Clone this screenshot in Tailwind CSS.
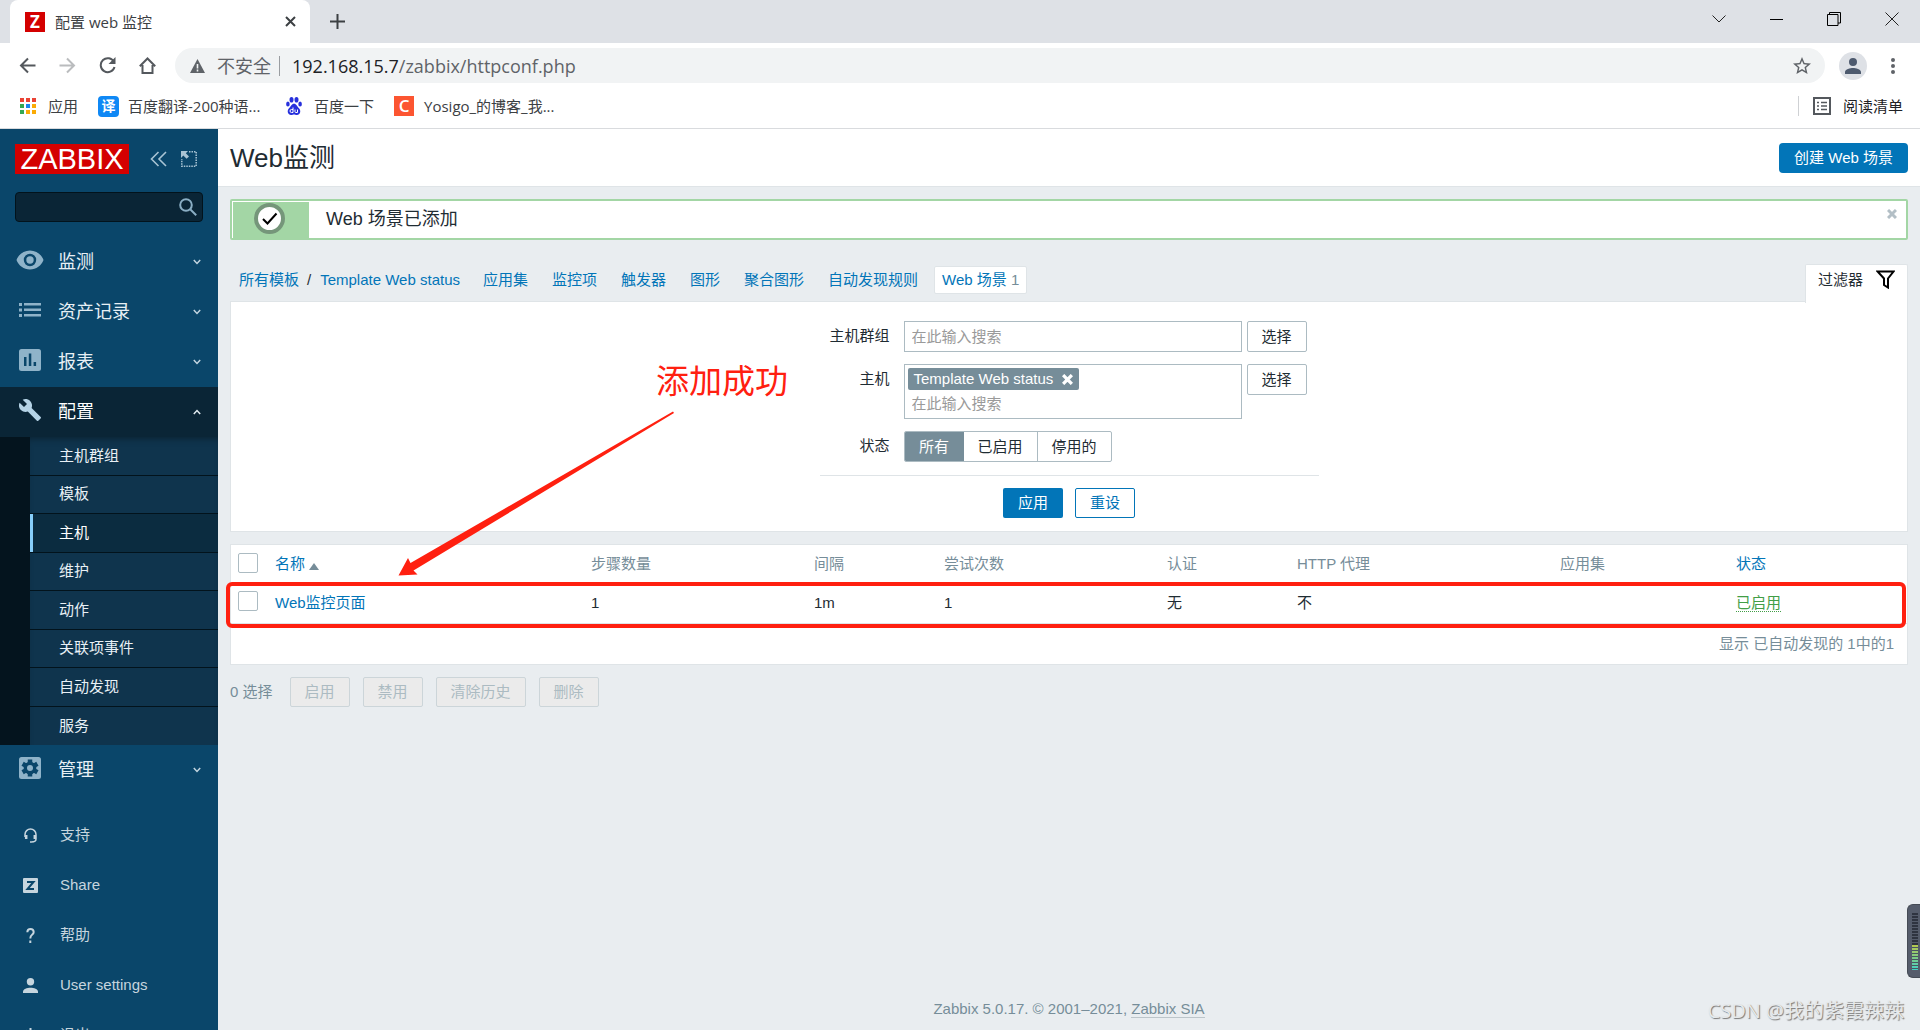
<!DOCTYPE html>
<html lang="zh-CN">
<head>
<meta charset="utf-8">
<title>配置 web 监控</title>
<script src="https://cdn.jsdelivr.net/npm/@tailwindcss/browser@4"></script>
</head>
<body class="relative flex h-screen flex-col overflow-hidden bg-[#e9edf0] font-['Liberation_Sans','Noto_Sans_CJK_SC',sans-serif] text-[15px] leading-5 text-[#1f2c33]">

<!-- Browser chrome -->
<header class="shrink-0 bg-white font-['Open_Sans','Noto_Sans_CJK_SC',sans-serif] text-[#3c4043]">
  <div class="flex h-[43px] items-center justify-between bg-[#dee1e6] pl-[10px]">
    <div class="flex h-full items-center">
      <div class="flex h-full w-[300px] items-center rounded-t-lg bg-white pl-[15px] pr-3">
        <span class="flex size-5 items-center justify-center bg-[#d40000] text-[17px] font-bold leading-5 text-white">Z</span>
        <span class="ml-[10px] flex-1 text-[15px]">配置 web 监控</span>
        <button aria-label="关闭标签页" class="flex size-4 items-center justify-center">
          <svg width="11" height="11" viewBox="0 0 11 11" stroke="#3c4043" stroke-width="2"><path d="M1 1l9 9M10 1l-9 9"/></svg>
        </button>
      </div>
      <button aria-label="新标签页" class="ml-5">
        <svg width="15" height="15" viewBox="0 0 15 15" stroke="#3c4043" stroke-width="2"><path d="M7.500 0v15M0 7.500h15"/></svg>
      </button>
    </div>
    <div class="flex items-center gap-11 pb-[6px] pr-[21px]">
      <button aria-label="搜索标签页"><svg width="14" height="14" viewBox="0 0 14 14" fill="none" stroke="#222"><path d="M.5 3.500l6.500 6.500 6.500-6.500"/></svg></button>
      <button aria-label="最小化"><svg width="13" height="14" viewBox="0 0 13 14" stroke="#000"><path d="M0 7.500h13"/></svg></button>
      <button aria-label="还原"><svg width="14" height="14" viewBox="0 0 14 14" fill="none" stroke="#000"><path d="M.5 2.500h10.500v11h-10.500zM2.500 2.500v-2h11v10.500h-2.500"/></svg></button>
      <button aria-label="关闭"><svg width="14" height="14" viewBox="0 0 14 14" stroke="#222"><path d="M.5 .5l13 13M13.500 .5l-13 13"/></svg></button>
    </div>
  </div>
  <div class="flex h-[45px] items-center pl-[19px] pr-[21px] text-[#5f6368]">
    <div class="flex items-center gap-[23px]">
      <button aria-label="后退"><svg width="17" height="17" viewBox="0 0 17 17" fill="none" stroke="#54585d" stroke-width="2"><path d="M16.500 8.500H2M9 1.500l-7 7 7 7"/></svg></button>
      <button aria-label="前进"><svg width="17" height="17" viewBox="0 0 17 17" fill="none" stroke="#babcbe" stroke-width="2"><path d="M.5 8.500H15M8 1.500l7 7-7 7"/></svg></button>
      <button aria-label="重新加载"><svg width="17" height="17" viewBox="0 0 17 17" fill="none" stroke="#54585d" stroke-width="2"><path d="M15 5A7 7 0 1 0 15.500 10"/><path d="M16.500 0v7h-7z" fill="#54585d" stroke="none"/></svg></button>
      <button aria-label="主页"><svg width="17" height="17" viewBox="0 0 17 17" fill="none" stroke="#54585d" stroke-width="2"><path d="M3.500 8v8h10V8M.8 9.200L8.500 1.500l7.700 7.700"/></svg></button>
    </div>
    <div class="ml-[19px] flex h-[35px] flex-1 items-center rounded-full bg-[#f1f3f4] pl-[15px] pr-[14px]">
      <svg width="15" height="14" viewBox="0 0 15 14"><path d="M7.500 0L15 14H0z" fill="#5f6368"/><path d="M7.500 5v4.500M7.500 10.500v2" stroke="#f1f3f4" stroke-width="1.600"/></svg>
      <span class="ml-3 text-lg leading-6">不安全</span>
      <span class="mx-2 h-5 w-px bg-[#9a9da1]"></span>
      <span class="ml-1 flex-1 text-lg leading-6"><span class="text-[#202124]">192.168.15.7</span>/zabbix/httpconf.php</span>
      <button aria-label="收藏"><svg width="18" height="18" viewBox="2 2 20 20" fill="#5f6368"><path d="M22 9.240l-7.190-.62L12 2 9.190 8.630 2 9.240l5.460 4.730L5.820 21 12 17.270 18.180 21l-1.630-7.030L22 9.240zM12 15.400l-3.760 2.270 1-4.280-3.320-2.880 4.380-.38L12 6.100l1.710 4.040 4.380.38-3.320 2.880 1 4.280L12 15.400z"/></svg></button>
    </div>
    <button aria-label="用户" class="ml-[14px] flex size-7 items-center justify-center rounded-full bg-[#dee1e6]">
      <svg width="16" height="16" viewBox="4 4 16 16" fill="#4d5a6e"><path d="M12 12a4 4 0 1 0 0-8 4 4 0 0 0 0 8zm0 2c-2.670 0-8 1.340-8 4v2h16v-2c0-2.660-5.330-4-8-4z"/></svg>
    </button>
    <button aria-label="菜单" class="ml-6 mr-1"><svg width="4" height="16" viewBox="0 0 4 16" fill="#5f6368"><circle cx="2" cy="2" r="2"/><circle cx="2" cy="8" r="2"/><circle cx="2" cy="14" r="2"/></svg></button>
  </div>
  <nav class="flex h-[41px] items-center border-b border-[#d9dbde] pb-1 pl-5 pr-[17px] text-[15px]">
    <a href="#" class="flex items-center gap-3">
      <svg width="16" height="16" viewBox="0 0 16 16"><path fill="#ea4335" d="M0 0h4v4H0zM6 0h4v4H6zM12 0h4v4h-4z"/><path fill="#34a853" d="M0 6h4v4H0zM0 12h4v4H0z"/><path fill="#1a86f0" d="M6 6h4v4H6z"/><path fill="#fbab05" d="M12 6h4v4h-4zM6 12h4v4H6zM12 12h4v4h-4z"/></svg>应用</a>
    <a href="#" class="ml-5 flex items-center gap-[9px]"><span class="flex size-[21px] items-center justify-center rounded-sm bg-[#0f88f5] text-sm font-bold text-white">译</span><span class="w-[135px] truncate">百度翻译-200种语...</span></a>
    <a href="#" class="ml-[23px] flex items-center gap-3">
      <svg width="16" height="18" viewBox="0 0 16 18" fill="#2730dc"><ellipse cx="5.500" cy="2.800" rx="2" ry="2.800"/><ellipse cx="10.500" cy="2.800" rx="2" ry="2.800"/><ellipse cx="1.900" cy="7" rx="1.800" ry="2.500"/><ellipse cx="14.100" cy="7" rx="1.800" ry="2.500"/><path d="M8 6.800c2.500 0 3 2.600 4.700 4.200 3 2.800 1.300 7-1.700 7-1.500 0-2-.5-3-.5s-1.500.5-3 .5c-3 0-4.700-4.200-1.700-7C5 9.400 5.500 6.800 8 6.800z"/><path d="M7 10.500v5H5.500a1.300 1.300 0 0 1 0-3H7M9 12.500v2.300q0 .7.800.7H11.500v-3" fill="none" stroke="#fff"/></svg>百度一下</a>
    <a href="#" class="ml-5 flex items-center gap-[10px]"><span class="flex size-5 items-center justify-center bg-[#fc5531] text-[17px] font-semibold text-white">C</span>Yosigo_的博客_我...</a>
    <a href="#" class="ml-auto flex items-center gap-3 border-l border-[#cfd1d4] pl-[14px] text-[#202124]">
      <svg width="18" height="18" viewBox="0 0 18 18" fill="none" stroke="#54585d" stroke-width="2"><path d="M1 1h16v16H1z"/><path d="M4 5.500h2M4 9h2M4 12.500h2M8 5.500h6M8 9h6M8 12.500h6" stroke-width="1.600"/></svg>阅读清单</a>
  </nav>
</header>

<div class="flex min-h-0 flex-1">
  <!-- Sidebar -->
  <aside class="w-[218px] shrink-0 overflow-hidden bg-[#0a466a] text-[#e8f0f5]">
    <div class="flex h-[63px] items-start pl-[15px] pt-[15px]">
      <a href="#" class="flex h-[30px] w-[114px] items-center justify-center bg-[#d40000] text-[29px] leading-[30px] text-white">ZABBIX</a>
      <button aria-label="折叠" class="ml-[21px] mt-[7px]"><svg width="17" height="16" viewBox="0 0 17 16" fill="none" stroke="#a9c4d4" stroke-width="1.600"><path d="M8.500 1L1.500 8l7 7M16 1L9 8l7 7"/></svg></button>
      <button aria-label="隐藏" class="ml-[14px] mt-[7px]"><svg width="16" height="16" viewBox="0 0 16 16" fill="none" stroke="#a9c4d4"><path d="M8 .8h7.200v14.400H.8V8" stroke-width="1.500" stroke-dasharray="1.500 1"/><path d="M0 0h7L4.800 2.200 8 5.400 5.600 7.800 2.300 4.600 0 7z" fill="#a9c4d4" stroke="none"/></svg></button>
    </div>
    <form class="mx-[15px] flex h-[30px] items-center rounded-sm border border-[#02131c] bg-[#0a2536] pr-[5px]">
      <input aria-label="搜索" class="min-w-0 flex-1 bg-transparent px-2 outline-none">
      <button type="button" aria-label="搜索"><svg width="18" height="18" viewBox="0 0 18 18" fill="none" stroke="#8aaec4" stroke-width="2"><circle cx="7" cy="7" r="5.800"/><path d="M11.200 11.200l6 6"/></svg></button>
    </form>
    <nav>
      <div class="mt-[15px] text-lg">
        <a href="#" class="flex h-[50px] items-center pl-4 pr-[17px]">
          <svg class="-mt-1" width="28" height="20" viewBox="0 0 28 20"><path fill="#8fb3c9" fill-rule="evenodd" d="M14 .5C7.800.5 2.500 4.400.5 10c2 5.600 7.300 9.500 13.500 9.500S25.500 15.600 27.500 10C25.500 4.400 20.200.5 14 .5zM14 16.200A6.200 6.200 0 1 1 14 3.800a6.200 6.200 0 0 1 0 12.400z"/><circle cx="14" cy="10" r="3.700" fill="#8fb3c9"/></svg>
          <span class="ml-[14px] flex-1">监测</span><svg width="8" height="6" viewBox="0 0 8 6" fill="none" stroke="#c3d5e0" stroke-width="1.500"><path d="M.8 1L4 4.500 7.200 1"/></svg></a>
        <a href="#" class="flex h-[50px] items-center pl-[19px] pr-[17px]">
          <svg class="-mt-1" width="22" height="14" viewBox="0 0 22 14" fill="#8fb3c9"><path d="M0 0h3v3H0zM0 5.500h3v3H0zM0 11h3v3H0zM5 0h17v2.500H5zM5 5.500h17V8H5zM5 11h17v2.500H5z"/></svg>
          <span class="ml-[17px] flex-1">资产记录</span><svg width="8" height="6" viewBox="0 0 8 6" fill="none" stroke="#c3d5e0" stroke-width="1.500"><path d="M.8 1L4 4.500 7.200 1"/></svg></a>
        <a href="#" class="flex h-[50px] items-center pl-[19px] pr-[17px]">
          <svg class="-mt-1" width="22" height="22" viewBox="0 0 22 22"><rect width="22" height="22" rx="2.500" fill="#8fb3c9"/><path fill="#0a466a" d="M5 8h2.500v9H5zM9.800 4.500h2.500V17H9.800zM14.600 13h2.500v4h-2.500z"/></svg>
          <span class="ml-[17px] flex-1">报表</span><svg width="8" height="6" viewBox="0 0 8 6" fill="none" stroke="#c3d5e0" stroke-width="1.500"><path d="M.8 1L4 4.500 7.200 1"/></svg></a>
        <a href="#" class="flex h-[50px] items-center bg-[#0a2536] pl-[19px] pr-[17px] text-white">
          <svg class="-mt-1" width="22" height="22" viewBox="1 1 22 22" fill="#b5d3e6"><path d="M22.700 19l-9.100-9.100c.9-2.300.4-5-1.500-6.900-2-2-5-2.400-7.400-1.300L9 6 6 9 1.600 4.700C.4 7.100.9 10.100 2.900 12.100c1.900 1.900 4.600 2.400 6.900 1.500l9.100 9.100c.4.4 1 .4 1.400 0l2.300-2.300c.5-.4.5-1.100.1-1.400z"/></svg>
          <span class="ml-[17px] flex-1">配置</span><svg width="8" height="6" viewBox="0 0 8 6" fill="none" stroke="#e0eaf0" stroke-width="1.500"><path d="M.8 5L4 1.500 7.200 5"/></svg></a>
      </div>
      <div class="grid h-[308px] auto-rows-fr divide-y divide-[#02131c] border-l-[30px] border-[#04141e] bg-[#0f344d] text-[15px] shadow-[inset_0_6px_8px_-6px_rgba(0,0,0,0.5)]">
        <a href="#" class="flex items-center pl-[29px]">主机群组</a>
        <a href="#" class="flex items-center pl-[29px]">模板</a>
        <a href="#" class="flex items-center bg-[#0b2c40] pl-[29px] text-white shadow-[inset_3px_0_0_#87cefa]">主机</a>
        <a href="#" class="flex items-center pl-[29px]">维护</a>
        <a href="#" class="flex items-center pl-[29px]">动作</a>
        <a href="#" class="flex items-center pl-[29px]">关联项事件</a>
        <a href="#" class="flex items-center pl-[29px]">自动发现</a>
        <a href="#" class="flex items-center pl-[29px]">服务</a>
      </div>
      <a href="#" class="flex h-[50px] items-center pl-[19px] pr-[17px] text-lg">
        <svg class="-mt-1" width="22" height="22" viewBox="0 0 22 22"><rect width="22" height="22" rx="2.500" fill="#8fb3c9"/><circle cx="11" cy="11" r="6.300" fill="#0a466a"/><path d="M11 2.500v17M3.600 6.800l14.800 8.400M3.600 15.200l14.800-8.400" stroke="#0a466a" stroke-width="4.500"/><circle cx="11" cy="11" r="3" fill="#8fb3c9"/></svg>
        <span class="ml-[17px] flex-1">管理</span><svg width="8" height="6" viewBox="0 0 8 6" fill="none" stroke="#c3d5e0" stroke-width="1.500"><path d="M.8 1L4 4.500 7.200 1"/></svg></a>
    </nav>
    <nav class="mt-[15px] text-[#c6d5de]">
      <a href="#" class="flex h-[50px] items-center gap-[22px] pl-[23px]"><svg width="15" height="15" viewBox="0 0 15 15" fill="none" stroke="#c6d5de" stroke-width="1.500"><path d="M2 9V6.500a5.500 5.500 0 0 1 11 0V11q0 3-4.500 3H7"/><path d="M3.200 7v4M11.800 7v4" stroke-width="2.500"/></svg>支持</a>
      <a href="#" class="flex h-[50px] items-center gap-[22px] pl-[23px]"><svg width="15" height="15" viewBox="0 0 15 15"><rect width="15" height="15" rx="1" fill="#c6d5de"/><path d="M4 4h6.500L4.500 11H11" fill="none" stroke="#0a466a" stroke-width="2"/></svg>Share</a>
      <a href="#" class="flex h-[50px] items-center gap-[22px] pl-[23px]"><svg width="15" height="15" viewBox="0 0 15 15" fill="none" stroke="#c6d5de" stroke-width="2"><path d="M4.300 4.200Q4.500 1 7.500 1t3.200 3Q10.700 5.500 9 6.800 7.300 8 7.300 10.500M7.300 12.500v2.500"/></svg>帮助</a>
      <a href="#" class="flex h-[50px] items-center gap-[22px] pl-[23px]"><svg width="15" height="15" viewBox="0 0 15 15" fill="#c6d5de"><circle cx="7.500" cy="3.700" r="3.700"/><path d="M0 15v-1.500C0 11 4 9.700 7.500 9.700S15 11 15 13.500V15z"/></svg>User settings</a>
      <a href="#" class="flex h-[50px] items-center gap-[22px] pl-[23px]"><svg width="15" height="15" viewBox="0 0 15 15" fill="none" stroke="#c6d5de" stroke-width="2"><path d="M7.500 0v7M4 2.500a6 6 0 1 0 7 0"/></svg>退出</a>
    </nav>
  </aside>

  <!-- Page -->
  <div class="flex min-w-0 flex-1 flex-col">
    <header class="flex h-[58px] shrink-0 items-center justify-between border-b border-[#dfe4e7] bg-white px-3">
      <h1 class="text-[26px] leading-8">Web监测</h1>
      <button class="h-[30px] rounded-sm bg-[#0275b8] px-[15px] text-white">创建 Web 场景</button>
    </header>
    <main class="flex flex-1 flex-col px-3 pt-3">
      <div class="flex h-[41px] shrink-0 rounded-xs border-2 border-[#a3d6a5] bg-white pl-px pt-px">
        <div class="flex w-[76px] items-center justify-center bg-[#a3d6a5] pr-1">
          <svg class="-mt-1" width="31" height="31" viewBox="0 0 31 31"><circle cx="15.500" cy="15.500" r="13.500" fill="#fff" stroke="#75967a" stroke-width="4"/><path d="M9 16l4.500 4.500 9-10" fill="none" stroke="#000" stroke-width="2"/></svg>
        </div>
        <p class="flex-1 pl-[17px] pt-[5px] text-lg leading-6">Web 场景已添加</p>
        <button aria-label="关闭" class="mr-[9px] mt-[7px] size-[10px]"><svg width="10" height="10" viewBox="0 0 10 10" stroke="#b3bfc6" stroke-width="3"><path d="M1 1l8 8M9 1L1 9"/></svg></button>
      </div>

      <div class="mt-6 flex h-[37px] shrink-0 items-start justify-between">
        <nav class="flex h-8 items-center gap-6 pl-[9px] text-[#0275b8]">
          <span class="flex gap-2"><a href="#">所有模板</a><span class="text-[#1f2c33]">/</span><a href="#" class="ml-px">Template Web status</a></span>
          <a href="#" class="-ml-px">应用集</a><a href="#">监控项</a><a href="#">触发器</a><a href="#">图形</a><a href="#">聚合图形</a><a href="#">自动发现规则</a>
          <a href="#" class="-ml-2 rounded-xs border border-[#dfe4e7] bg-white px-[7px] py-[3px]">Web 场景 <span class="text-[#768d99]">1</span></a>
        </nav>
        <a href="#" class="relative flex h-[39px] items-start gap-[13px] rounded-t-xs border border-b-0 border-[#dfe4e7] bg-white pl-3 pr-3 pt-[5px]">过滤器
          <svg width="19" height="19" viewBox="0 0 19 19" fill="none" stroke="#000" stroke-width="2"><path d="M1.500 1.500h16L12 8.500v9l-4-2.500V8.500z"/></svg></a>
      </div>

      <form class="flex h-[231px] shrink-0 flex-col items-center border border-[#dfe4e7] bg-white pt-[19px]">
        <div class="grid w-[499px] grid-cols-[73px_338px_60px] gap-x-[5px] gap-y-3 border-b border-[#dfe4e7] pb-[13px]">
          <label for="group" class="-mr-1 pt-[5px] text-right whitespace-nowrap">
            <span class="pr-[7px]">主机群组</span></label>
          <input id="group" placeholder="在此输入搜索" class="ml-[6px] h-[31px] w-[338px] border border-[#acbbc2] px-[7px] outline-none placeholder:text-[#9a9a9a]">
          <button type="button" class="ml-[6px] h-[31px] w-[60px] rounded-xs border border-[#acbbc2]">选择</button>
          <label for="host" class="-mr-1 pt-[5px] text-right"><span class="pr-[7px]">主机</span></label>
          <div class="ml-[6px] h-[55px] w-[338px] border border-[#acbbc2] p-[3px]">
            <span class="flex h-[22px] w-[171px] items-center justify-between rounded-xs bg-[#768d99] px-[6px] text-white">Template Web status
              <button type="button" aria-label="移除"><svg width="11" height="11" viewBox="0 0 10 10" stroke="#fff" stroke-width="3"><path d="M1 1l8 8M9 1L1 9"/></svg></button></span>
            <input id="host" placeholder="在此输入搜索" class="mt-1 block h-5 w-full px-1 outline-none placeholder:text-[#9a9a9a]">
          </div>
          <button type="button" class="ml-[6px] h-[31px] w-[60px] rounded-xs border border-[#acbbc2]">选择</button>
          <span id="st" class="-mr-1 pt-[5px] text-right"><span class="pr-[7px]">状态</span></span>
          <div role="radiogroup" aria-labelledby="st" class="ml-[6px] flex h-[31px] w-max overflow-hidden rounded-xs border border-[#acbbc2]">
            <label class="flex w-[59px] items-center justify-center bg-[#768d99] text-white"><input type="radio" name="status" class="sr-only" checked>所有</label>
            <label class="flex w-[73px] items-center justify-center"><input type="radio" name="status" class="sr-only">已启用</label>
            <label class="flex w-[74px] items-center justify-center border-l border-[#acbbc2]"><input type="radio" name="status" class="sr-only">停用的</label>
          </div>
        </div>
        <div class="mt-3 flex gap-3">
          <button type="button" class="h-[30px] w-[60px] rounded-xs bg-[#0275b8] text-white">应用</button>
          <button type="button" class="h-[30px] w-[60px] rounded-xs border border-[#0275b8] text-[#0275b8]">重设</button>
        </div>
      </form>

      <div class="relative mt-3 shrink-0 border border-[#dfe4e7] bg-white">
        <table class="w-full table-fixed text-left">
          <colgroup><col class="w-[39px]"><col class="w-[316px]"><col class="w-[223px]"><col class="w-[130px]"><col class="w-[223px]"><col class="w-[130px]"><col class="w-[263px]"><col class="w-[176px]"><col class="w-[176px]"></colgroup>
          <thead>
            <tr class="h-[38px] text-[#768d99]">
              <th class="pb-0.5 pl-[7px]"><input type="checkbox" aria-label="全选" class="block size-5 appearance-none rounded-xs border border-[#acbbc2] bg-white"></th>
              <th class="px-[5px] font-normal"><a href="#" class="flex items-center gap-1 text-[#0275b8]">名称<svg class="mt-1" width="10" height="7" viewBox="0 0 10 7" fill="#768d99"><path d="M5 0l5 7H0z"/></svg></a></th>
              <th class="px-[5px] font-normal">步骤数量</th><th class="px-[5px] font-normal">间隔</th><th class="px-[5px] font-normal">尝试次数</th><th class="px-[5px] font-normal">认证</th><th class="px-[5px] font-normal">HTTP 代理</th><th class="px-[5px] font-normal">应用集</th>
              <th class="px-[5px] font-normal"><a href="#" class="text-[#0275b8]">状态</a></th>
            </tr>
          </thead>
          <tbody>
            <tr class="h-10 border-b border-[#dfe4e7]">
              <td class="pb-1 pl-[7px]"><input type="checkbox" aria-label="Web监控页面" class="block size-5 appearance-none rounded-xs border border-[#acbbc2] bg-white"></td>
              <td class="px-[5px]"><a href="#" class="text-[#0275b8]">Web监控页面</a></td>
              <td class="px-[5px]">1</td><td class="px-[5px]">1m</td><td class="px-[5px]">1</td><td class="px-[5px]">无</td><td class="px-[5px]">不</td><td></td>
              <td class="px-[5px]"><a href="#" class="border-b border-dotted border-[#429e47] text-[#429e47]">已启用</a></td>
            </tr>
          </tbody>
        </table>
        <p class="flex h-10 items-center justify-end pr-[13px] text-[#768d99]">显示 已自动发现的 1中的1</p>
        <div class="pointer-events-none absolute -left-[5px] right-px top-[37px] h-[46px] rounded-md border-4 border-[#ff2010]"></div>
      </div>

      <div class="mt-3 flex items-center gap-[13px] text-[#768d99]">
        <span class="mr-1">0 选择</span>
        <button disabled class="h-[30px] rounded-xs border border-[#ccd5d9] bg-[#ebebeb] px-[14px] text-[#acbbc2]">启用</button>
        <button disabled class="h-[30px] rounded-xs border border-[#ccd5d9] bg-[#ebebeb] px-[14px] text-[#acbbc2]">禁用</button>
        <button disabled class="h-[30px] rounded-xs border border-[#ccd5d9] bg-[#ebebeb] px-[14px] text-[#acbbc2]">清除历史</button>
        <button disabled class="h-[30px] rounded-xs border border-[#ccd5d9] bg-[#ebebeb] px-[14px] text-[#acbbc2]">删除</button>
      </div>
      <footer class="mt-auto pb-[11px] text-center text-[#768d99]">Zabbix 5.0.17. © 2001–2021, <a href="#" class="border-b border-[#bcc5ca]">Zabbix SIA</a></footer>
    </main>
  </div>
</div>

<!-- Annotation: success note with arrow to the new row -->
<p class="absolute left-[656px] top-[362px] text-[33px] leading-10 text-[#ff2010]">添加成功</p>
<svg class="pointer-events-none absolute left-[398px] top-[410px]" width="278" height="168" viewBox="398 410 278 168" fill="#ff2010"><path d="M398.500 575.500L408 558l2.500 5L673 411.500l1 1.500L413.500 570.500l4 4z"/></svg>

<!-- Level meter docked to the window edge -->
<div class="absolute right-0 top-[904px] h-[74px] w-[13px] rounded-l-md border border-r-0 border-[#454b55] bg-[#555c6b] pl-1 pt-2">
  <div class="h-8 w-[6px] bg-[repeating-linear-gradient(#2f3440_0_2px,#555c6b_2px_3px)]"></div>
  <div class="h-[25px] w-[6px] bg-linear-to-b from-[#b5c94c] via-[#7ccc84] to-[#3fd0c5]"><div class="h-full bg-[repeating-linear-gradient(transparent_0_2px,#4a5560_2px_3px)]"></div></div>
</div>
<p class="absolute bottom-[7px] right-4 font-['Open_Sans','Noto_Sans_CJK_SC',sans-serif] text-xl leading-6 text-[#e6e9eb] [text-shadow:1px_1px_1px_#777]">CSDN @我的紫霞辣辣</p>
</body>
</html>
